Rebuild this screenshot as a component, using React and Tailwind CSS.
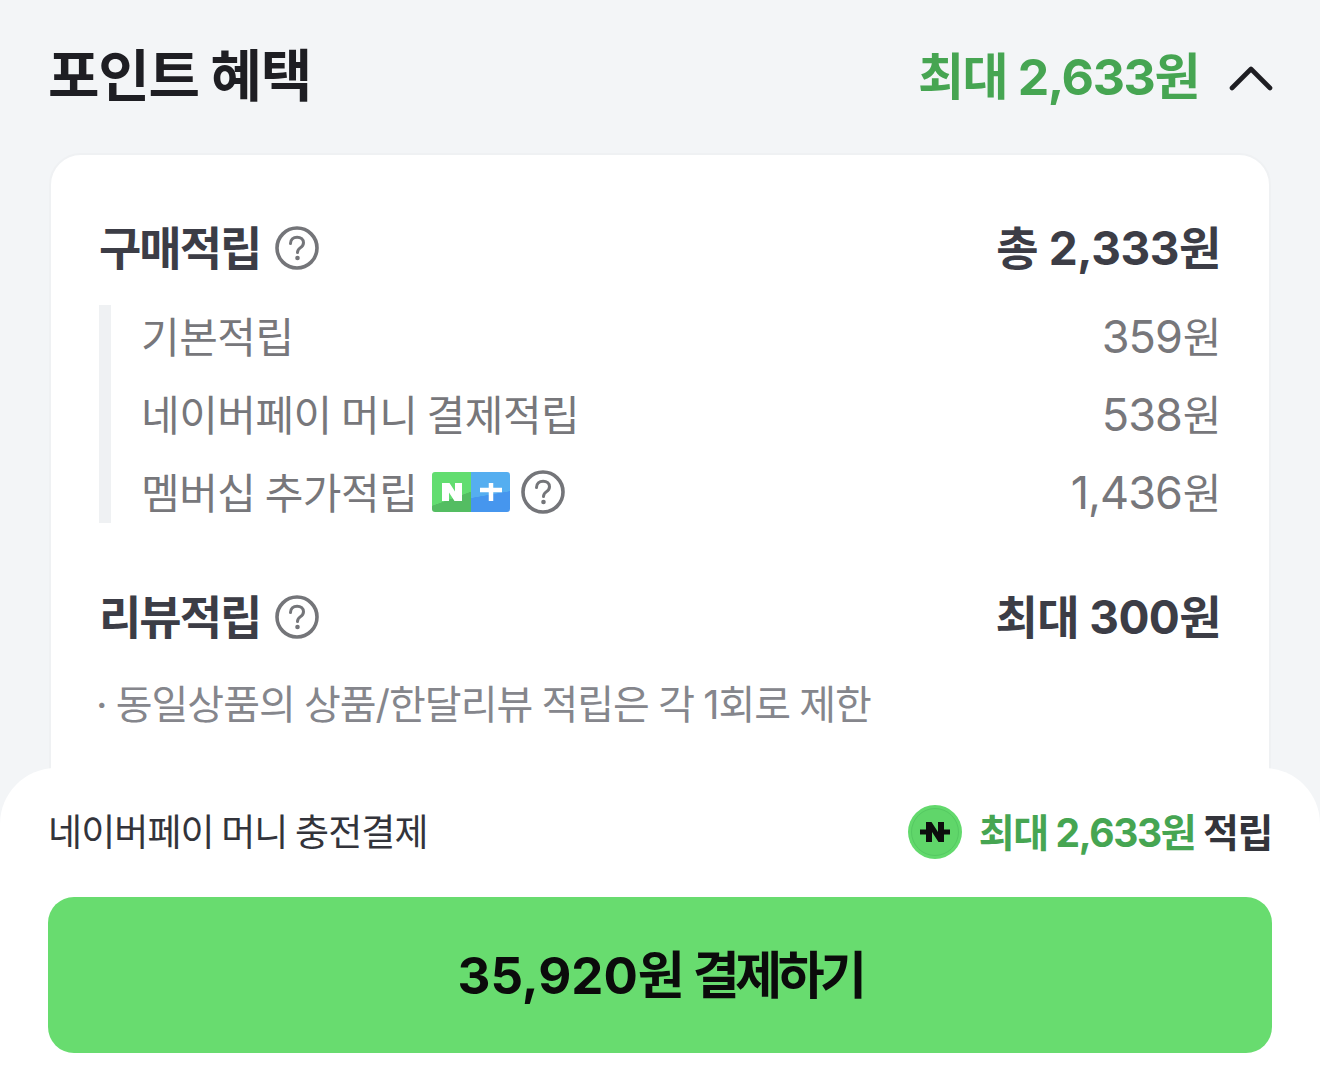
const font = { fontFamily: 'Inter, "Noto Sans CJK KR", sans-serif' };

function Help({ className = "" }) {
  return (
    <svg viewBox="0 0 44 44" className={`w-[44px] h-[44px] shrink-0 ${className}`} fill="none" stroke="currentColor">
      <circle cx="22" cy="22" r="20" strokeWidth="3.6" />
      <path d="M15.500 17.500c0-4 2.800-6.300 6.600-6.300 3.700 0 6.400 2.200 6.400 5.500 0 2.600-1.500 3.900-3.300 5.200-1.900 1.400-2.700 2.300-2.700 4.600" strokeWidth="3" strokeLinecap="round" />
      <circle cx="22.500" cy="32" r="2.300" fill="currentColor" stroke="none" />
    </svg>
  );
}

function MembershipBadge() {
  return (
    <span className="flex w-[78px] h-[40px] rounded-[3px] overflow-hidden shrink-0">
      <span className="relative w-[39px] flex items-center justify-center bg-[linear-gradient(160deg,#62dd70_0%,#62dd70_62%,#54bd62_63%,#54bd62_100%)]">
        <svg viewBox="0 0 22 22" className="w-[22px] h-[22px]" fill="#fff">
          <path d="M1 2h7.500l5.500 8.500V2h7v18h-7.500L8 11.500V20H1z" />
        </svg>
      </span>
      <span className="w-[39px] flex items-center justify-center bg-[linear-gradient(170deg,#55aef0_0%,#55aef0_55%,#4696ee_56%,#4696ee_100%)]">
        <svg viewBox="0 0 24 24" className="w-[24px] h-[24px]" fill="none" stroke="#fff" strokeWidth="4.500">
          <path d="M1 10h22M12 3v18" />
        </svg>
      </span>
    </span>
  );
}

function NaverPointIcon() {
  return (
    <svg viewBox="0 0 56 56" className="w-[56px] h-[56px] shrink-0">
      <circle cx="28" cy="28" r="27" fill="#62d96c" />
      <circle cx="28" cy="28" r="23.500" fill="#60d66a" stroke="#55c962" strokeWidth="1" />
      <path d="M13 25.500h6V18h5.500l6.500 10V18h6v7.500h6v5h-6V38h-5.500L25 28v10h-6v-7.500h-6z" fill="#0d0d0d" />
    </svg>
  );
}

function SubRow({ label, amount, children }) {
  return (
    <div className="flex items-center justify-between h-[78px] shrink-0">
      <div className="flex items-center gap-[15px]">
        <span className="pt-[3px] [word-spacing:-2px]">{label}</span>
        {children}
      </div>
      <span className="flex items-baseline">
        <span className="text-[45px] tracking-[-1px]">{amount}</span>
        <span className="ml-[1px]">원</span>
      </span>
    </div>
  );
}

export default function App() {
  return (
    <div style={font} className="relative w-[1320px] h-[1076px] overflow-hidden bg-[#f3f5f7]">
      <div className="px-[48px] pt-[40px]">
        <div className="flex items-center justify-between h-[72px]">
          <h2 className="text-[56px] font-bold tracking-[-1.3px] text-[#1e1e23] leading-none">포인트 혜택</h2>
          <div className="flex items-center gap-[27px] -mr-[4px] pt-[2px]">
            <span className="text-[50px] font-bold tracking-[-1.4px] text-[#46a552] leading-none">최대 2,633원</span>
            <svg viewBox="0 0 50 30" className="w-[50px] h-[30px]" fill="none" stroke="#1e1e23" strokeWidth="4.600" strokeLinecap="round" strokeLinejoin="round">
              <path d="M6 26 25 7l19 19" />
            </svg>
          </div>
        </div>
      </div>

      <div className="mx-[49px] mt-[41px] h-[760px] rounded-[32px] bg-white border-2 border-[#eff1f3] px-[48px] pt-[60px]">
        <div className="flex items-center justify-between h-[66px]">
          <div className="flex items-center gap-[15px]">
            <span className="text-[46px] font-bold tracking-[-2px] text-[#3c3d46] leading-none">구매적립</span>
            <Help className="text-[#747579]" />
          </div>
          <span className="text-[46px] font-bold tracking-[-0.4px] text-[#3c3d46] leading-none">총 2,333원</span>
        </div>

        <div className="mt-[24px] border-l-[12px] border-[#eff1f3] pl-[30px] text-[42px] tracking-[-0.5px] text-[#77777b] leading-none h-[218px] flex flex-col justify-center">
          <SubRow label="기본적립" amount="359" />
          <SubRow label="네이버페이 머니 결제적립" amount="538" />
          <SubRow label="멤버십 추가적립" amount="1,436">
            <span className="flex items-center gap-[11px]">
              <MembershipBadge />
              <Help className="text-[#747579]" />
            </span>
          </SubRow>
        </div>

        <div className="flex items-center justify-between h-[66px] mt-[61px]">
          <div className="flex items-center gap-[15px]">
            <span className="text-[46px] font-bold tracking-[-2px] text-[#3c3d46] leading-none">리뷰적립</span>
            <Help className="text-[#747579]" />
          </div>
          <span className="text-[46px] font-bold tracking-[-0.6px] text-[#3c3d46] leading-none">최대 300원</span>
        </div>

        <p className="mt-[35px] -ml-[3px] text-[40px] tracking-[-1px] [word-spacing:-1px] text-[#85868c] leading-none">· 동일상품의 상품/한달리뷰 적립은 각 1회로 제한</p>
      </div>

      <div className="absolute left-0 right-0 top-[768px] bottom-0 rounded-t-[56px] bg-white px-[48px] pt-[36px]">
        <div className="flex items-center justify-between h-[56px]">
          <span className="text-[37px] tracking-[-0.9px] [word-spacing:-2px] text-[#33343b] leading-none">네이버페이 머니 충전결제</span>
          <div className="flex items-center gap-[16px]">
            <NaverPointIcon />
            <span className="text-[39px] font-bold tracking-[-1.4px] text-[#33343b] leading-none">
              <span className="text-[#46a552]">최대 2,633원</span> 적립
            </span>
          </div>
        </div>
        <button className="mt-[37px] w-full h-[156px] pt-[1px] rounded-[26px] bg-[#68dc6f] text-[51px] font-bold [word-spacing:-4px] text-[#0b0b0b] leading-none">
          35,920원 <span className="tracking-[-4.5px]">결제하기</span>
        </button>
      </div>
    </div>
  );
}
